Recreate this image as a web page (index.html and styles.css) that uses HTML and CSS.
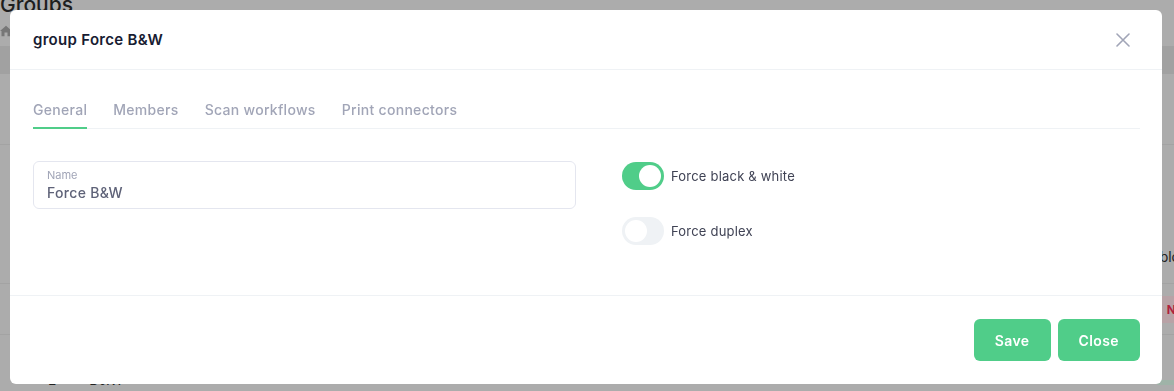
FILE: index.html
```html
<!DOCTYPE html>
<html lang="en">
<head>
<meta charset="UTF-8" />
<meta name="viewport" content="width=device-width, initial-scale=1.0">
<title>Groups</title>
<link rel="stylesheet" href="styles.css">
</head>
<body>
<div class="page">
  <h1 class="page-title">Groups</h1>
  <div class="crumbs">
    <svg width="12" height="12" viewBox="0 0 16 16"><path d="M8 1 0 8h2v7h4v-5h4v5h4V8h2z" fill="#777"/></svg>
  </div>
  <div class="toolbar"></div>
  <div class="table">
    <div class="row tall"></div>
    <div class="row head"><span class="cell-right">blo</span></div>
    <div class="row"><span class="badge red">N</span></div>
    <div class="row last"><span class="cell-left">Force B&amp;W</span><span class="badge green">V</span></div>
  </div>
</div>

<div class="backdrop">
  <div class="modal">
    <div class="modal-header">
      <h3>group Force B&amp;W</h3>
      <button class="btn-x" onclick="closeModal()">
        <svg width="14" height="14" viewBox="0 0 14 14"><path d="M1 1 13 13M13 1 1 13" stroke="#a1a5b7" stroke-width="1.6" stroke-linecap="round"/></svg>
      </button>
    </div>
    <div class="modal-body">
      <div class="tabs">
        <a class="tab active">General</a>
        <a class="tab">Members</a>
        <a class="tab">Scan workflows</a>
        <a class="tab">Print connectors</a>
      </div>
      <div class="general">
        <label class="field">
          <span class="field-label">Name</span>
          <input type="text" value="Force B&amp;W">
        </label>
        <div class="switches">
          <label class="switch">
            <input type="checkbox" checked>
            <span class="slider"></span>
            <span class="switch-text">Force black &amp; white</span>
          </label>
          <label class="switch">
            <input type="checkbox">
            <span class="slider"></span>
            <span class="switch-text">Force duplex</span>
          </label>
        </div>
      </div>
    </div>
    <div class="modal-footer">
      <button class="btn">Save</button>
      <button class="btn" onclick="closeModal()">Close</button>
    </div>
  </div>
</div>

<script>
function closeModal(){
  document.querySelector('.backdrop').style.display='none';
}
</script>
</body>
</html>
```

FILE: styles.css
```css
body { margin:0; font-family:'Inter','Noto Sans',sans-serif; background:#acacac; color:#181c32; overflow:hidden; }
.page { height:391px; }
.page-title { margin:0; font-size:21px; font-weight:500; line-height:22px; margin-top:-6px; color:#1e1e1e; }
.crumbs { height:30px; display:flex; align-items:center; }
.toolbar { height:28px; background:#a1a1a1; }
.row { border-bottom:1px solid #a3a3a3; height:50px; position:relative; display:flex; align-items:center; }
.row.tall { height:70px; }
.row.head { height:138px; align-items:flex-end; }
.cell-right { margin-left:auto; margin-right:-6px; font-size:14px; color:#222; margin-bottom:18px; }
.badge { margin-left:auto; margin-right:-12px; font-size:12px; font-weight:700; padding:6px 10px; border-radius:4px; }
.badge.red { background:#b8a2a6; color:#b0203c; }
.row.last { align-items:flex-end; }
.badge.green { background:#9fb3a8; color:#1f8a52; margin-bottom:-22px; }
.cell-left { font-size:14px; color:#222; position:absolute; left:48px; top:46px; }

.backdrop { position:fixed; inset:0; display:flex; align-items:flex-start; justify-content:center; padding:10px 12px 0 10px; }
.modal { flex:1; background:#fff; border-radius:6px; height:374px; display:flex; flex-direction:column; }
.modal-header { height:60px; box-sizing:border-box; border-bottom:1px solid #eff2f5; display:flex; align-items:center; justify-content:space-between; padding:0 32px 0 23px; }
.modal-header h3 { margin:0; font-size:15px; font-weight:600; color:#181c32; letter-spacing:0.3px; }
.btn-x { background:none; border:none; padding:0; cursor:pointer; display:flex; }
.modal-body { flex:1; padding:31px 22px 0 23px; border-bottom:1px solid #eff2f5; }
.tabs { display:flex; gap:26px; border-bottom:1px solid #eff2f5; }
.tab { font-size:14px; font-weight:500; color:#a1a5b7; padding:0 0 9px; border-bottom:2px solid transparent; margin-bottom:-1px; cursor:pointer; letter-spacing:0.3px; }
.tab.active { border-bottom-color:#50cd89; }
.general { display:flex; gap:46px; padding-top:32px; }
.field { width:543px; height:48px; box-sizing:border-box; border:1px solid #e4e6ef; border-radius:6px; padding:7px 13px 0; display:flex; flex-direction:column; }
.field-label { font-size:11px; color:#a1a5b7; line-height:13px; }
.field input { border:none; outline:none; padding:0; font-family:inherit; font-size:14px; font-weight:500; color:#5e6278; margin-top:2px; letter-spacing:0.3px; }
.switches { display:flex; flex-direction:column; gap:27px; padding-top:1px; }
.switch { display:flex; align-items:center; gap:7px; cursor:pointer; }
.switch input { display:none; }
.slider { width:42px; height:28px; border-radius:14px; background:#eff2f5; position:relative; }
.slider::after { content:''; position:absolute; top:3px; left:3px; width:22px; height:22px; border-radius:50%; background:#fff; }
.switch input:checked + .slider { background:#50cd89; }
.switch input:checked + .slider::after { left:17px; }
.switch-text { font-size:13px; color:#3f4254; letter-spacing:0.2px; }
.modal-footer { height:88px; display:flex; justify-content:flex-end; align-items:center; gap:7px; padding:0 22px; }
.btn { background:#50cd89; color:#fff; border:none; border-radius:6px; height:42px; padding:0 21px; font-family:inherit; font-size:14px; font-weight:600; cursor:pointer; letter-spacing:0.4px; }
.btn:hover { background:#47be7d; }
```
